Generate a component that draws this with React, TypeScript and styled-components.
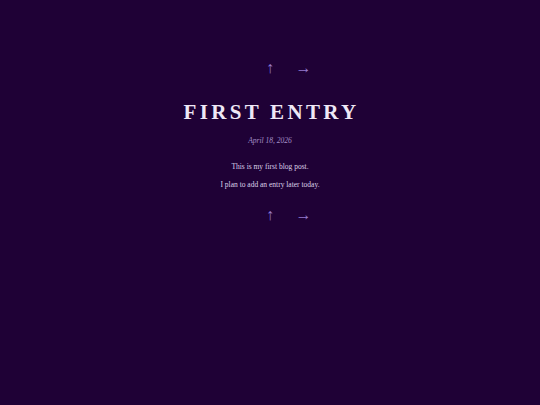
import React from "react";
import styled, { createGlobalStyle } from "styled-components";

const Global = createGlobalStyle`
  html, body { margin: 0; padding: 0; background: #1f0136; }
  body { font-family: "Liberation Serif", "DejaVu Serif", serif; }
`;

const Page = styled.main`
  min-height: 405px;
  background: #1f0136;
  display: flex;
  flex-direction: column;
  align-items: center;
  padding-top: 56px;
  box-sizing: border-box;
`;

const Nav = styled.nav`
  display: flex;
  justify-content: center;
  gap: 18px;
  height: 24px;
  align-items: center;
`;

const NavLink = styled.a<{ $hidden?: boolean }>`
  color: #957cd0;
  text-decoration: none;
  font-size: 16px;
  width: 15px;
  text-align: center;
  visibility: ${(p) => (p.$hidden ? "hidden" : "visible")};
`;

const Title = styled.h1`
  margin: 20px 0 0;
  font-size: 21px;
  font-weight: bold;
  letter-spacing: 3.3px;
  color: #efe8f6;
  line-height: 24px;
  padding-left: 3px;
`;

const DateLine = styled.p`
  margin: 12px 0 0;
  font-style: italic;
  font-size: 7.5px;
  color: #a48fc6;
`;

const Body = styled.section`
  margin-top: 17px;
  display: flex;
  flex-direction: column;
  align-items: center;
  gap: 9px;
`;

const Para = styled.p`
  margin: 0;
  font-size: 7.5px;
  line-height: 9px;
  color: #ddd2ea;
`;

const Spacer = styled.div`
  height: 14px;
`;

function ArrowNav() {
  return (
    <Nav>
      <NavLink $hidden>←</NavLink>
      <NavLink href="#">↑</NavLink>
      <NavLink href="#">→</NavLink>
    </Nav>
  );
}

export default function App() {
  return (
    <>
      <Global />
      <Page>
        <ArrowNav />
        <Title>FIRST ENTRY</Title>
        <DateLine>April 18, 2026</DateLine>
        <Body>
          <Para>This is my first blog post.</Para>
          <Para>I plan to add an entry later today.</Para>
        </Body>
        <Spacer />
        <ArrowNav />
      </Page>
    </>
  );
}
